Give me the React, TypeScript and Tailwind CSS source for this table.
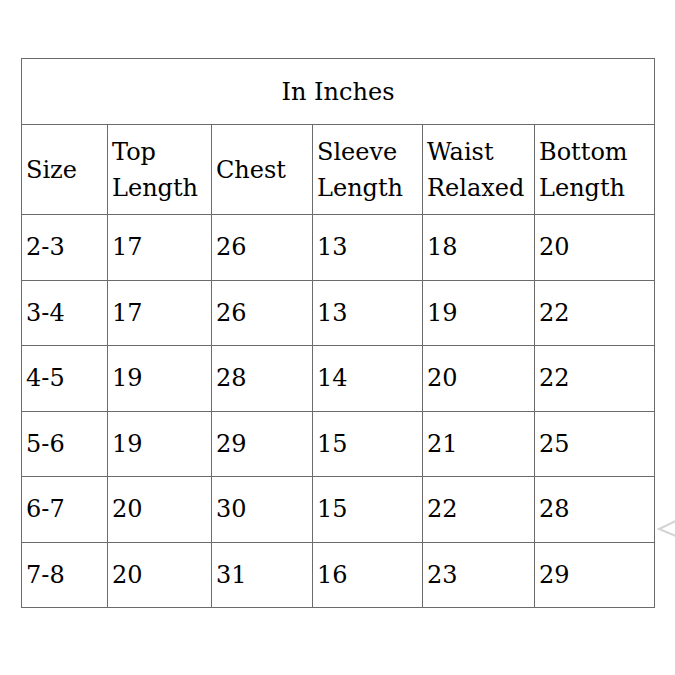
const headers = [
  ["Size"],
  ["Top", "Length"],
  ["Chest"],
  ["Sleeve", "Length"],
  ["Waist", "Relaxed"],
  ["Bottom", "Length"],
];

const rows = [
  ["2-3", "17", "26", "13", "18", "20"],
  ["3-4", "17", "26", "13", "19", "22"],
  ["4-5", "19", "28", "14", "20", "22"],
  ["5-6", "19", "29", "15", "21", "25"],
  ["6-7", "20", "30", "15", "22", "28"],
  ["7-8", "20", "31", "16", "23", "29"],
];

const widths = ["w-[86px]", "w-[104px]", "w-[101px]", "w-[110px]", "w-[112px]", "w-[120px]"];

export default function App() {
  return (
    <div className="relative w-[675px] h-[675px] bg-white overflow-hidden font-['DejaVu_Serif',serif] text-black text-[24px]">
      <div className="pt-[58px] pl-[21px]">
        <table className="table-fixed border-collapse w-[633px]">
          <colgroup>
            {widths.map((w, i) => (
              <col key={i} className={w} />
            ))}
          </colgroup>
          <tbody>
            <tr className="h-[66px]">
              <td colSpan={6} className="border border-[#6b6b6b] text-center leading-none">
                In Inches
              </td>
            </tr>
            <tr className="h-[90px]">
              {headers.map((h, i) => (
                <td key={i} className="border border-[#6b6b6b] px-1 align-middle leading-[36px]">
                  {h.map((line, j) => (
                    <div key={j} className="whitespace-nowrap">{line}</div>
                  ))}
                </td>
              ))}
            </tr>
            {rows.map((r, i) => (
              <tr key={i} className="h-[65.5px]">
                {r.map((c, j) => (
                  <td key={j} className="border border-[#6b6b6b] px-1 align-middle leading-none">
                    {c}
                  </td>
                ))}
              </tr>
            ))}
          </tbody>
        </table>
      </div>
      <svg className="absolute left-[655px] top-[516px]" width="22" height="24" viewBox="0 0 22 24">
        <path d="M21 5 L4 13 L21 20" fill="none" stroke="#d4d4d4" strokeWidth="2" strokeLinecap="round" />
      </svg>
    </div>
  );
}
